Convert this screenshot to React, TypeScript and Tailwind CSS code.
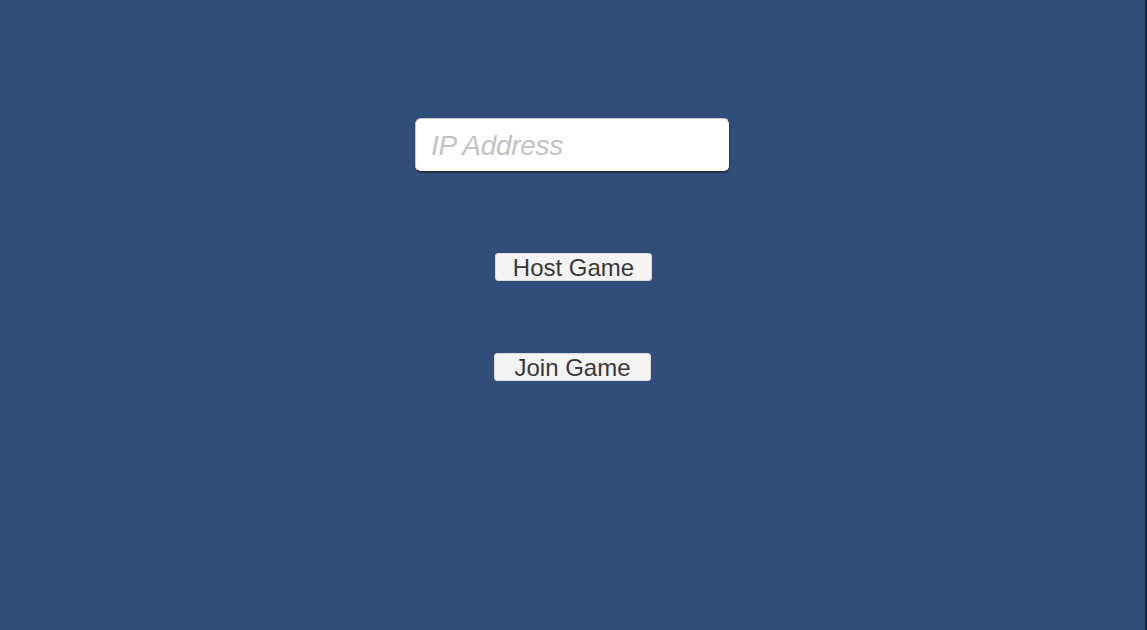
export default function App() {
  return (
    <div className="flex h-[630px] w-full bg-[#232323]" style={{ fontFamily: "'Liberation Sans', Arial, sans-serif" }}>
      <main className="flex flex-1 flex-col items-center bg-[#314d79] pt-[118px]">
        {/* IP input */}
        <div className="h-[54px] w-[315px] rounded-[6px] border border-[#c8c8c8] border-b-[#2a2a2a] border-r-[#3a3a3a] bg-white shadow-[0_1px_1px_rgba(0,0,0,0.4)]">
          <input
            placeholder="IP Address"
            className="h-full w-full bg-transparent px-[15px] pt-[2px] text-[28px] italic tracking-[-0.3px] text-[#323232] outline-none placeholder:text-[#c2c2c2]"
          />
        </div>

        <GameButton label="Host Game" className="mt-[81px] translate-x-[1px]" />
        <GameButton label="Join Game" className="mt-[72px]" />
      </main>
      <div className="w-[2px]" />
    </div>
  );
}

function GameButton({ label, className }: { label: string; className?: string }) {
  return (
    <button
      className={
        "flex h-[28px] w-[157px] items-center justify-center rounded-[3px] border border-[#d8d8d8] bg-[#f4f4f4] pt-[2px] text-[24px] leading-none text-[#383838] " +
        (className ?? "")
      }
    >
      {label}
    </button>
  );
}
